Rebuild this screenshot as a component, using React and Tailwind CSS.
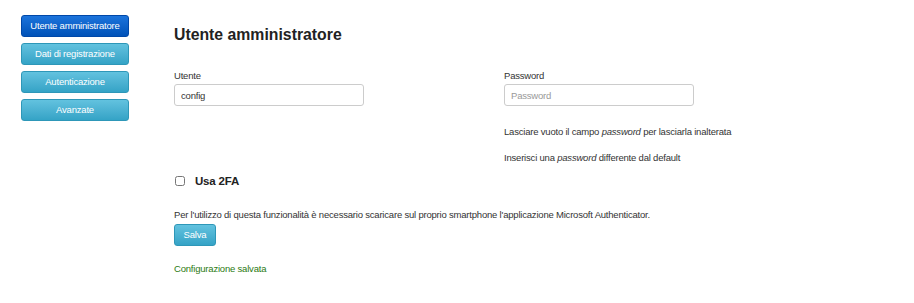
import React, { useState } from 'react';

const tabs = ['Utente amministratore', 'Dati di registrazione', 'Autenticazione', 'Avanzate'];

const App = () => {
  const [active, setActive] = useState(0);
  const [user, setUser] = useState('config');
  const [twoFa, setTwoFa] = useState(false);

  return (
    <div className="min-h-screen bg-white text-[#333] flex font-['Liberation_Sans',Arial,sans-serif] text-[9.5px] tracking-[-0.2px]">
      {/* Sidebar */}
      <div className="w-[174px] shrink-0 pl-[21px] pt-[15px] flex flex-col gap-[6px]">
        {tabs.map((t, i) => (
          <button
            key={t}
            onClick={() => setActive(i)}
            className={`w-[108px] h-[22px] rounded-[3px] text-white text-[9.5px] tracking-[-0.2px] leading-none whitespace-nowrap border ${
              i === active
                ? 'bg-linear-to-b from-[#1c74dc] to-[#0052b8] border-[#0048a8]'
                : 'bg-linear-to-b from-[#62c2df] to-[#34a3c6] border-[#2e97b8]'
            }`}
          >
            {t}
          </button>
        ))}
      </div>

      {/* Content */}
      <div className="flex-1 pt-[25px]">
        <h1 className="text-[15.8px] tracking-normal font-bold text-[#222] leading-[20px]">Utente amministratore</h1>

        <div className="mt-[25px] grid grid-cols-[330px_1fr]">
          <div>
            <label className="block leading-[12px] mb-[2px]">Utente</label>
            <input
              value={user}
              onChange={(e) => setUser(e.target.value)}
              className="block w-[190px] h-[22px] px-[6px] border border-[#ccc] rounded-[3px] text-[9.5px] tracking-[-0.2px] text-[#333] outline-none"
            />
          </div>
          <div>
            <label className="block leading-[12px] mb-[2px]">Password</label>
            <input
              type="password"
              placeholder="Password"
              className="block w-[190px] h-[22px] px-[6px] border border-[#ccc] rounded-[3px] text-[9.5px] tracking-[-0.2px] placeholder:text-[#999] outline-none"
            />
            <p className="mt-[20px] leading-[12px]">
              Lasciare vuoto il campo <i>password</i> per lasciarla inalterata
            </p>
            <p className="mt-[14px] leading-[12px]">
              Inserisci una <i>password</i> differente dal default
            </p>
          </div>
        </div>

        <label className="mt-[10px] flex items-center gap-[10px] h-[14px]">
          <input
            type="checkbox"
            checked={twoFa}
            onChange={(e) => setTwoFa(e.target.checked)}
            className="w-[10px] h-[10px] ml-[1px] m-0"
          />
          <span className="text-[11.5px] font-bold text-[#222] leading-[14px]">Usa 2FA</span>
        </label>

        <p className="mt-[21px] leading-[12px]">
          Per l'utilizzo di questa funzionalità è necessario scaricare sul proprio smartphone l'applicazione Microsoft Authenticator.
        </p>
        <button className="block mt-[3px] w-[42px] h-[22px] rounded-[3px] text-white text-[9.5px] tracking-[-0.2px] bg-linear-to-b from-[#62c2df] to-[#34a3c6] border border-[#2e97b8]">
          Salva
        </button>
        <p className="mt-[17px] leading-[12px] text-[#2b7a12]">Configurazione salvata</p>
      </div>
    </div>
  );
};

export default App;
